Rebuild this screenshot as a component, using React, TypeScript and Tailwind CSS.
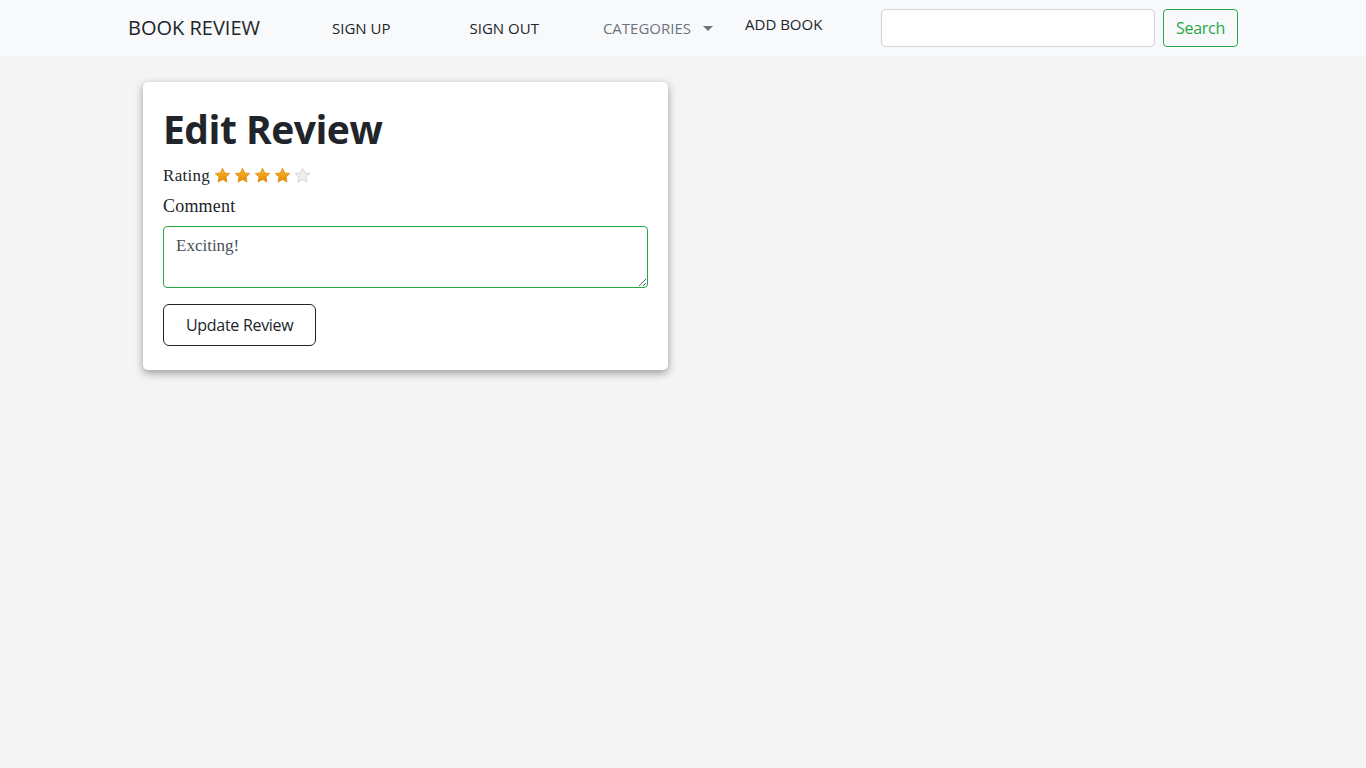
import React from 'react'

const Star = ({ filled }: { filled: boolean }) => (
    <svg width="17" height="17" viewBox="0 0 24 24">
        <defs>
            <linearGradient id="sg" x1="0" y1="0" x2="0" y2="1">
                <stop offset="0" stopColor="#f7b733" />
                <stop offset="1" stopColor="#e58b00" />
            </linearGradient>
        </defs>
        <path
            d="M12 1.8l3.1 6.6 7.2.8-5.4 4.9 1.5 7.1L12 17.6l-6.4 3.6 1.5-7.1L1.7 9.2l7.2-.8z"
            fill={filled ? 'url(#sg)' : '#eeeeee'}
            stroke={filled ? '#d98500' : '#c8c8c8'}
            strokeWidth="1"
            strokeLinejoin="round"
        />
    </svg>
)

const App: React.FC = () => {
    const rating = 4

    return (
        <div className="min-h-screen bg-[#f4f4f4] font-['Open_Sans',sans-serif]">
            {/* navbar */}
            <nav className="h-14 bg-[#f8f9fa]">
                <div className="w-[1140px] mx-auto px-3 h-full flex items-center">
                    <a className="ml-[3px] text-[20px] text-[#212529]">BOOK REVIEW</a>
                    <a className="ml-[72px] text-[15px] text-[#212529]">SIGN UP</a>
                    <a className="ml-[79px] text-[15px] text-[#212529]">SIGN OUT</a>
                    <a className="ml-[64px] text-[15px] text-[#6c757d] flex items-center">
                        CATEGORIES
                        <span className="ml-[12px] w-0 h-0 border-l-[5px] border-r-[5px] border-t-[5px] border-l-transparent border-r-transparent border-t-[#6c757d]"></span>
                    </a>
                    <a className="ml-[32px] -mt-2 text-[15px] text-[#212529]">ADD BOOK</a>
                    <div className="ml-auto mr-[3px] flex items-center gap-2">
                        <input className="w-[274px] h-[38px] bg-white border border-[#ced4da] rounded-[4px] outline-none px-3" />
                        <button className="h-[38px] w-[75px] border border-[#28a745] rounded-[4px] text-[#28a745] text-[16px] tracking-[-0.3px]">Search</button>
                    </div>
                </div>
            </nav>

            {/* card */}
            <div className="w-[1140px] mx-auto px-3 pt-[26px]">
                <div className="ml-[18px] w-[525px] bg-white rounded-[5px] shadow-[0_3px_9px_rgba(0,0,0,0.38)] p-5 pb-6">
                    <h1 className="text-[39px] font-bold text-[#212529] leading-[1.2] tracking-[-0.5px] mt-[4px]">Edit Review</h1>
                    <div className="mt-[10px] flex items-center font-['Liberation_Serif',serif] text-[17px] text-[#212529] tracking-[0.3px]">
                        <span>Rating</span>
                        <div className="ml-[4px] flex items-center gap-[3px]">
                            {[1, 2, 3, 4, 5].map((i) => (
                                <Star key={i} filled={i <= rating} />
                            ))}
                        </div>
                    </div>
                    <div className="mt-[6px] font-['Liberation_Serif',serif] text-[18px] leading-[24px] tracking-[0.2px] text-[#212529]">Comment</div>
                    <textarea
                        className="mt-[8px] block w-full h-[62px] border border-[#28a745] rounded-[4px] px-3 py-[6px] font-['Liberation_Serif',serif] text-[17px] text-[#495057] outline-none"
                        defaultValue="Exciting!"
                    />
                    <button className="mt-4 h-[42px] px-[22px] border border-[#212529] rounded-[6px] text-[16px] text-[#212529] tracking-[-0.3px]">Update Review</button>
                </div>
            </div>
        </div>
    )
}

export default App
